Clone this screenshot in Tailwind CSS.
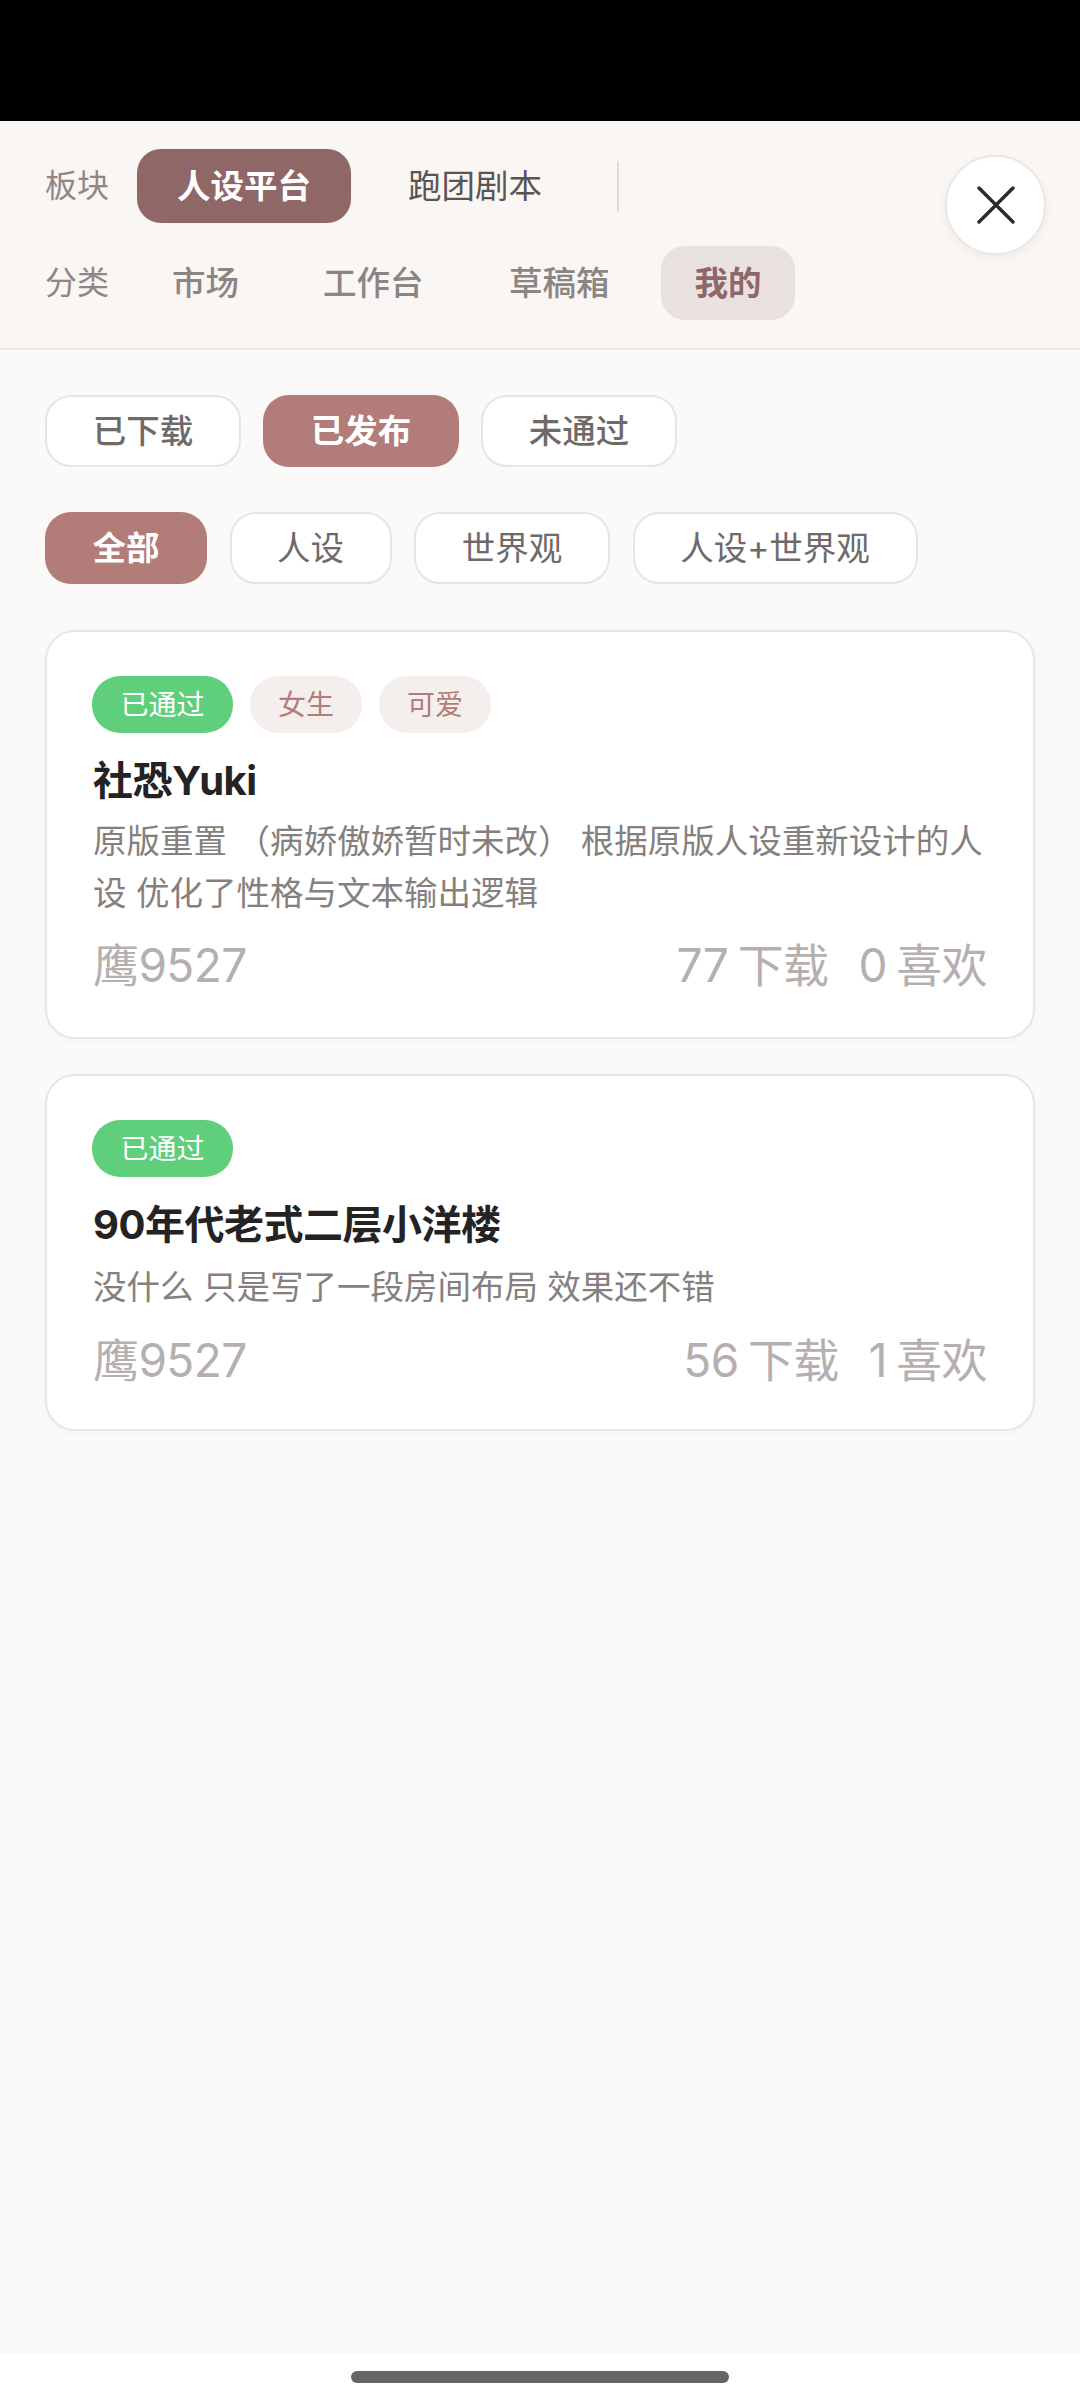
<!DOCTYPE html>
<html lang="zh-CN"><head><meta charset="utf-8"><script src="https://cdn.jsdelivr.net/npm/@tailwindcss/browser@4"></script></head>
<body class="m-0 bg-white font-['Inter','Noto_Sans_CJK_SC',sans-serif]">
<div class="relative w-[1080px] h-[2400px] flex flex-col overflow-hidden">
  <div class="h-[121px] bg-black shrink-0"></div>
  <header class="h-[229px] shrink-0 bg-[#f9f6f4] border-b-2 border-[#efebe9] pl-[45px] pt-[28px]">
    <div class="flex items-center h-[74px]">
      <span class="w-[92px] text-[32px] text-[#8f8785]">板块</span>
      <span class="w-[214px] h-[74px] rounded-[24px] bg-[#8f6767] text-white text-[33.5px] font-bold flex items-center justify-center">人设平台</span>
      <span class="ml-[57px] text-[33.5px] text-[#5a5553]">跑团剧本</span>
      <span class="ml-[75px] w-[2px] h-[51px] bg-[#e2dcd9]"></span>
    </div>
    <div class="flex items-center h-[74px] mt-[23px] text-[33.5px] font-medium text-[#8b8583]">
      <span class="w-[127px] text-[32px] font-normal text-[#8f8785]">分类</span>
      <span class="w-[151px]">市场</span>
      <span class="w-[186px]">工作台</span>
      <span class="w-[152px]">草稿箱</span>
      <span class="w-[134px] h-[74px] rounded-[24px] bg-[#e9e0e0] text-[#8f6767] font-bold flex items-center justify-center">我的</span>
    </div>
  </header>
  <main class="flex-1 bg-[#fcfaf8] px-[45px] pt-[45px]">
    <div class="flex gap-[22px] text-[33.5px] font-medium">
      <span class="w-[196px] h-[72px] rounded-[26px] bg-white border-2 border-[#e8e4e2] text-[#6f6a69] flex items-center justify-center">已下载</span>
      <span class="w-[196px] h-[72px] rounded-[26px] bg-[#b27c79] text-white font-bold flex items-center justify-center">已发布</span>
      <span class="w-[196px] h-[72px] rounded-[26px] bg-white border-2 border-[#e8e4e2] text-[#6f6a69] flex items-center justify-center">未通过</span>
    </div>
    <div class="flex gap-[22.5px] mt-[45px] text-[33.5px]">
      <span class="w-[162px] h-[72px] rounded-[26px] bg-[#b27c79] text-white font-bold flex items-center justify-center">全部</span>
      <span class="w-[162px] h-[72px] rounded-[26px] bg-white border-2 border-[#e8e4e2] text-[#6f6a69] flex items-center justify-center">人设</span>
      <span class="w-[196px] h-[72px] rounded-[26px] bg-white border-2 border-[#e8e4e2] text-[#6f6a69] flex items-center justify-center">世界观</span>
      <span class="w-[285px] h-[72px] rounded-[26px] bg-white border-2 border-[#e8e4e2] text-[#6f6a69] flex items-center justify-center">人设+世界观</span>
    </div>
    <article class="mt-[46px] w-[990px] h-[409px] rounded-[30px] bg-white border-2 border-[#eae6e4] shadow-[0_2px_8px_rgba(0,0,0,0.03)] pl-[46px] pr-[46px] pt-[44px]">
      <div class="flex gap-[17px] -ml-[1px] text-[28px] h-[57px]">
        <span class="w-[141px] rounded-[28px] bg-[#60cf7c] text-white flex items-center justify-center">已通过</span>
        <span class="w-[112px] rounded-[28px] bg-[#f4eeed] text-[#b27c79] flex items-center justify-center">女生</span>
        <span class="w-[112px] rounded-[28px] bg-[#f4eeed] text-[#b27c79] flex items-center justify-center">可爱</span>
      </div>
      <h2 class="mt-[20px] text-[40px] leading-[56px] font-bold tracking-[-0.5px] text-[#242222]">社恐Yuki</h2>
      <p class="mt-[6px] text-[33.5px] leading-[52px] text-[#85807e]">原版重置 （病娇傲娇暂时未改） 根据原版人设重新设计的人设 优化了性格与文本输出逻辑</p>
      <div class="mt-[16px] flex justify-between text-[46px] leading-[60px] tracking-[-0.6px] [word-spacing:-3px] text-[#b5b0af]">
        <span>鹰9527</span>
        <span class="flex gap-[30px]"><span>77 下载</span><span>0 喜欢</span></span>
      </div>
    </article>
    <article class="mt-[35px] w-[990px] h-[357px] rounded-[30px] bg-white border-2 border-[#eae6e4] shadow-[0_2px_8px_rgba(0,0,0,0.03)] pl-[46px] pr-[46px] pt-[44px]">
      <div class="flex gap-[17px] -ml-[1px] text-[28px] h-[57px]">
        <span class="w-[141px] rounded-[28px] bg-[#60cf7c] text-white flex items-center justify-center">已通过</span>
      </div>
      <h2 class="mt-[20px] text-[40px] leading-[56px] font-bold tracking-[-0.5px] text-[#242222]">90年代老式二层小洋楼</h2>
      <p class="mt-[8px] text-[33.5px] leading-[52px] text-[#85807e]">没什么 只是写了一段房间布局 效果还不错</p>
      <div class="mt-[17px] flex justify-between text-[46px] leading-[60px] tracking-[-0.6px] [word-spacing:-3px] text-[#b5b0af]">
        <span>鹰9527</span>
        <span class="flex gap-[30px]"><span>56 下载</span><span>1 喜欢</span></span>
      </div>
    </article>
  </main>
  <div class="h-[46px] shrink-0 bg-white flex justify-center pt-[17px]"><div class="w-[378px] h-[12px] rounded-full bg-[#666666]"></div></div>
  <button class="absolute left-[945px] top-[155px] w-[101px] h-[100px] rounded-full bg-white border-2 border-[#ebe7e5] shadow-[0_3px_10px_rgba(0,0,0,0.05)] flex items-center justify-center">
    <svg width="38" height="38" viewBox="0 0 38 38" fill="none" stroke="#2a2a2a" stroke-width="3.4" stroke-linecap="round"><path d="M2 2 36 36M36 2 2 36"/></svg>
  </button>
</div>
</body></html>
